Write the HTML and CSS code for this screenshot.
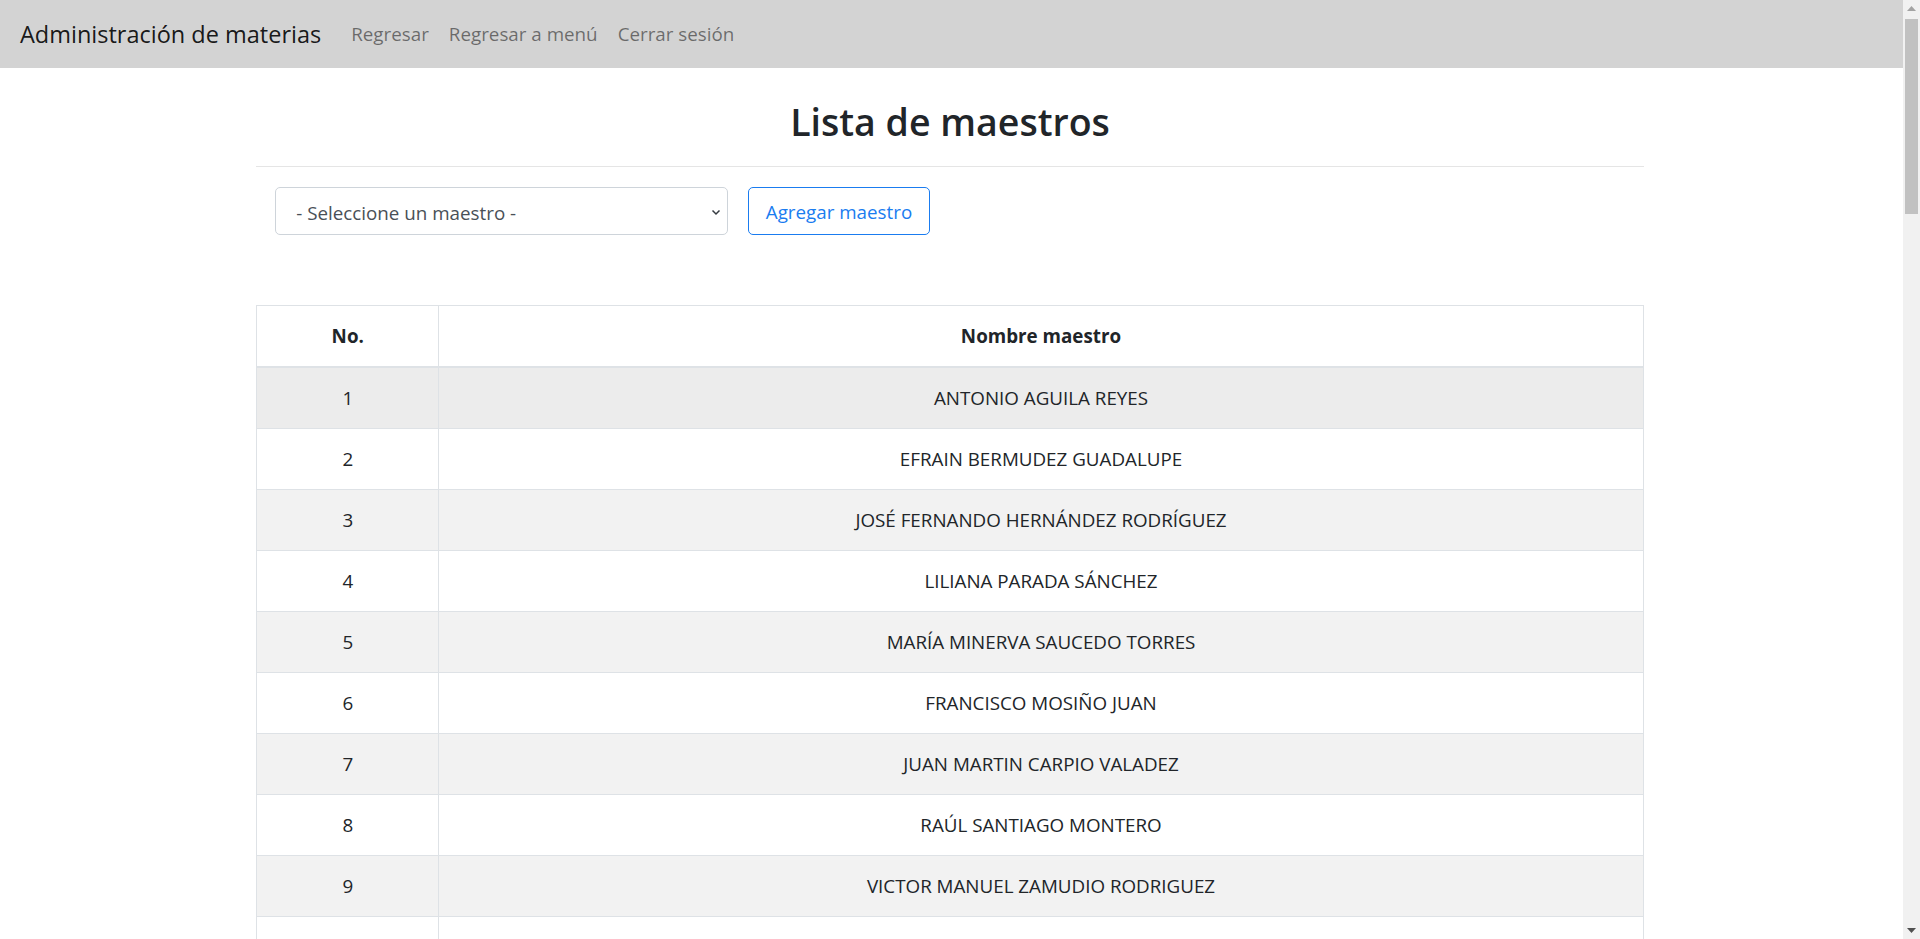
FILE: index.html
```html
<!DOCTYPE html>
<html lang="es">
<head>
<meta charset="utf-8">
<title>Lista de maestros</title>
<link rel="stylesheet" href="styles.css">
</head>
<body>
<div class="page">
  <nav class="navbar">
    <a class="brand" href="#">Administración de materias</a>
    <ul class="nav">
      <li><a class="nav-link" href="#">Regresar</a></li>
      <li><a class="nav-link" href="#">Regresar a menú</a></li>
      <li><a class="nav-link" href="#">Cerrar sesión</a></li>
    </ul>
  </nav>
  <main class="container">
    <h2 class="title">Lista de maestros</h2>
    <hr class="divider">
    <div class="toolbar">
      <div class="select-wrap">
        <select class="select">
          <option>- Seleccione un maestro -</option>
        </select>
        <svg class="chevron" width="12" height="12" viewBox="0 0 12 12"><path d="M2.5 4.5 L6 8 L9.5 4.5" fill="none" stroke="#343a40" stroke-width="1.5"/></svg>
      </div>
      <button class="btn-outline" type="button">Agregar maestro</button>
    </div>
    <table class="table">
      <thead>
        <tr><th class="col-no">No.</th><th>Nombre maestro</th></tr>
      </thead>
      <tbody>
        <tr class="odd hover"><td>1</td><td>ANTONIO AGUILA REYES</td></tr>
        <tr><td>2</td><td>EFRAIN BERMUDEZ GUADALUPE</td></tr>
        <tr class="odd"><td>3</td><td>JOSÉ FERNANDO HERNÁNDEZ RODRÍGUEZ</td></tr>
        <tr><td>4</td><td>LILIANA PARADA SÁNCHEZ</td></tr>
        <tr class="odd"><td>5</td><td>MARÍA MINERVA SAUCEDO TORRES</td></tr>
        <tr><td>6</td><td>FRANCISCO MOSIÑO JUAN</td></tr>
        <tr class="odd"><td>7</td><td>JUAN MARTIN CARPIO VALADEZ</td></tr>
        <tr><td>8</td><td>RAÚL SANTIAGO MONTERO</td></tr>
        <tr class="odd"><td>9</td><td>VICTOR MANUEL ZAMUDIO RODRIGUEZ</td></tr>
        <tr class="empty"><td></td><td></td></tr>
      </tbody>
    </table>
  </main>
</div>
<div class="scrollbar" aria-hidden="true">
  <div class="sb-btn"><svg width="9" height="5" viewBox="0 0 9 5"><path d="M0 5 L4.5 0 L9 5 Z" fill="#a3a3a3"/></svg></div>
  <div class="sb-track"><div class="sb-thumb"></div></div>
  <div class="sb-btn"><svg width="9" height="5" viewBox="0 0 9 5"><path d="M0 0 L4.5 5 L9 0 Z" fill="#505050"/></svg></div>
</div>
</body>
</html>
```

FILE: styles.css
```css
* { box-sizing: border-box; }
html, body { margin: 0; padding: 0; }
body {
  font-family: "Open Sans", "Noto Sans", sans-serif;
  font-size: 18.8px;
  line-height: 30px;
  color: #212529;
  background: #fff;
}
.page {
  margin-right: 20px;
}
.navbar {
  height: 68px;
  margin-right: -3px;
  background: #d3d3d3;
  display: flex;
  align-items: center;
  padding: 0 20px;
}
.brand {
  font-size: 23.5px;
  line-height: 37px;
  color: rgba(0,0,0,.9);
  text-decoration: none;
  margin-right: 20px;
}
.nav {
  display: flex;
  list-style: none;
  margin: 0;
  padding: 0;
}
.nav-link {
  display: block;
  padding: 0 10px;
  color: rgba(0,0,0,.5);
  text-decoration: none;
}
.container {
  width: 1425px;
  margin: 0 auto;
  padding: 0 18.75px;
}
.title {
  margin: 30px 0 9px;
  font-size: 37.5px;
  font-weight: 600;
  line-height: 48px;
  text-align: center;
}
.divider {
  margin: 20px 0;
  border: 0;
  border-top: 1px solid rgba(0,0,0,.1);
}
.toolbar {
  display: flex;
  gap: 20px;
  padding: 0 19px;
}
.select-wrap {
  position: relative;
  width: 453px;
}
.select {
  -webkit-appearance: none;
  appearance: none;
  width: 100%;
  height: 47.5px;
  padding: 9.5px 40px 5.5px 20px;
  font-family: inherit;
  font-size: 18.8px;
  line-height: 30px;
  color: #495057;
  background: #fff;
  border: 1px solid #ced4da;
  border-radius: 5px;
}
.chevron {
  position: absolute;
  right: 6px;
  top: 19px;
  pointer-events: none;
}
.btn-outline {
  height: 47.5px;
  padding: 9px 16.5px 6px;
  font-family: inherit;
  font-size: 18.8px;
  line-height: 30px;
  color: #1a7cf0;
  background: transparent;
  border: 1px solid #1a7cf0;
  border-radius: 5px;
}
.table {
  width: 100%;
  margin-top: 70px;
  border-collapse: collapse;
  border: 1px solid #dee2e6;
}
.table th, .table td {
  padding: 15px 18.75px;
  border: 1px solid #dee2e6;
  text-align: center;
  vertical-align: top;
  line-height: 30px;
}
.table thead th {
  border-bottom: 2px solid #dee2e6;
  font-weight: 700;
}
.table tr.empty td { height: 61px; }
.col-no { width: 182px; }
.table tr.odd { background: #f2f2f2; }
.table tr.hover { background: #ececec; }
.scrollbar {
  position: fixed;
  top: 0;
  right: 0;
  width: 17px;
  height: 100vh;
  background: #f1f1f1;
  display: flex;
  flex-direction: column;
}
.sb-btn {
  height: 17px;
  display: flex;
  align-items: center;
  justify-content: center;
}
.sb-track {
  flex: 1;
  padding: 2px 2px 0;
}
.sb-thumb {
  height: 195px;
  background: #c1c1c1;
}
```
